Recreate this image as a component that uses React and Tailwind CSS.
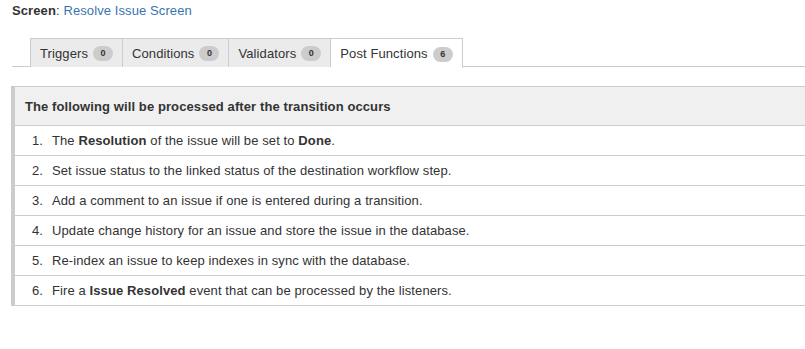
import React from "react";

const tabs = [
  { label: "Triggers", count: 0 },
  { label: "Conditions", count: 0 },
  { label: "Validators", count: 0 },
  { label: "Post Functions", count: 6, active: true },
];

const items = [
  <>The <b>Resolution</b> of the issue will be set to <b>Done</b>.</>,
  <>Set issue status to the linked status of the destination workflow step.</>,
  <>Add a comment to an issue if one is entered during a transition.</>,
  <>Update change history for an issue and store the issue in the database.</>,
  <>Re-index an issue to keep indexes in sync with the database.</>,
  <>Fire a <b>Issue Resolved</b> event that can be processed by the listeners.</>,
];

export default function App() {
  return (
    <div
      className="w-[805px] h-[349px] bg-white text-[#333] text-[13px] tracking-[0.1px] overflow-hidden"
      style={{ fontFamily: '"Liberation Sans", Arial, sans-serif' }}
    >
      {/* screen link */}
      <div className="pl-[12px] pt-[1px] h-[20px] leading-[20px] text-[13px]">
        <b>Screen</b>: <span className="text-[#3b73af]">Resolve Issue Screen</span>
      </div>

      {/* tabs */}
      <div className="mt-[18px] ml-[12px] pl-[18px] flex border-b border-[#ccc] h-[29px]">
        {tabs.map((t, i) => (
          <div
            key={t.label}
            className={`flex items-center gap-[5px] px-[9px] pt-[1px] h-[29px] border-t border-[#ccc] ${
              i === 0 ? "border-l" : ""
            } border-r ${
              t.active ? "bg-white h-[30px] -mb-px" : "bg-[#ebebeb]"
            }`}
          >
            <span>{t.label}</span>
            <span className="bg-[#ccc] rounded-full h-[15px] min-w-[20px] px-[6px] text-[9px] font-bold leading-[15px] text-center text-[#333] tracking-normal">
              {t.count}
            </span>
          </div>
        ))}
      </div>

      {/* table */}
      <div className="mt-[19px] ml-[11px] border-l-[4px] border-[#ccc]">
        <div className="bg-[#f0f0f0] border-t border-b border-[#ccc] h-[40px] flex items-center pl-[10px] pt-[1px] font-bold">
          The following will be processed after the transition occurs
        </div>
        <ol>
          {items.map((it, i) => (
            <li key={i} className="flex h-[30px] items-center border-b border-[#ccc]">
              <span className="w-[37px] text-right pr-[9px]">{i + 1}.</span>
              <span>{it}</span>
            </li>
          ))}
        </ol>
      </div>
    </div>
  );
}
